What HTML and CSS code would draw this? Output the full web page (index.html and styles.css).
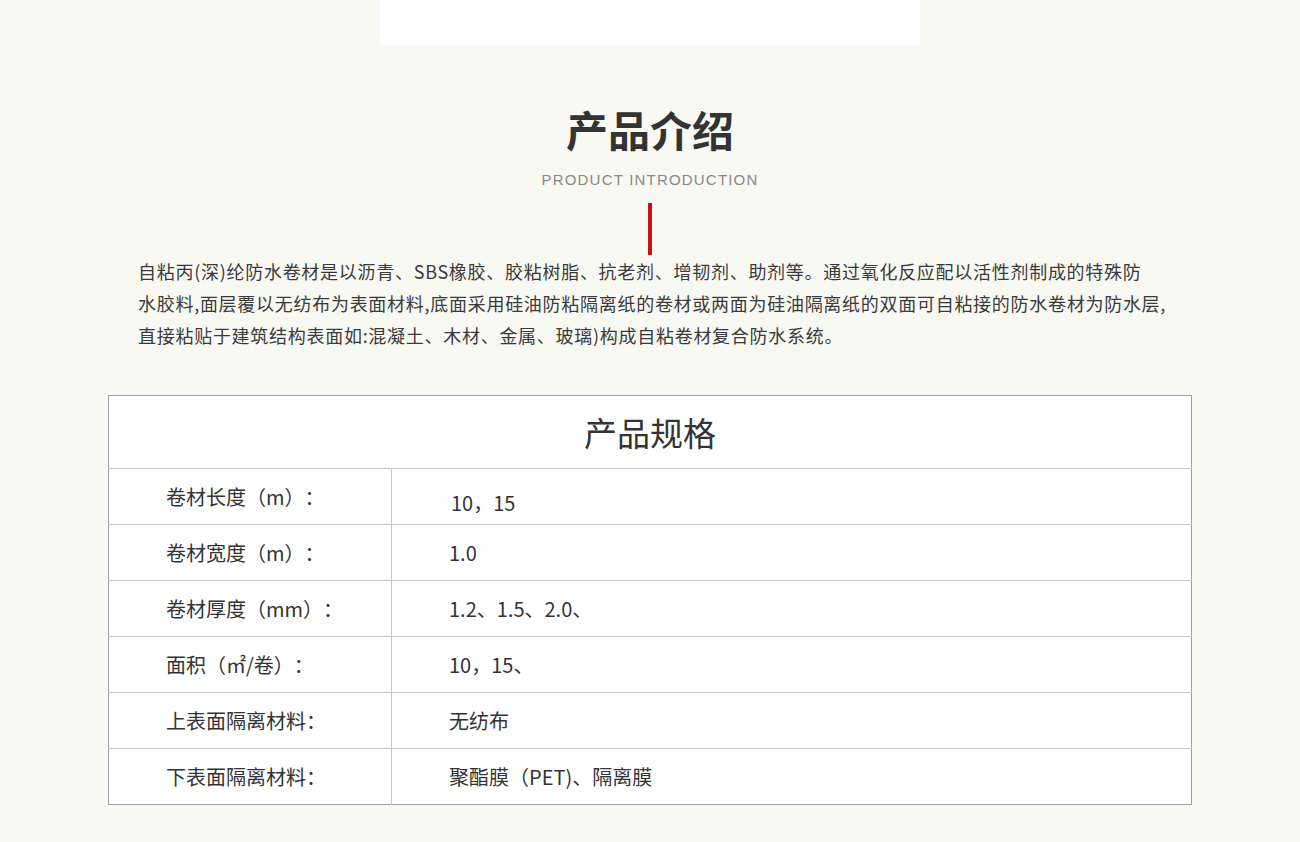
FILE: index.html
```html
<!DOCTYPE html>
<html lang="zh-CN">
<head>
<meta charset="utf-8">
<title>产品介绍</title>
<link rel="stylesheet" href="styles.css">
</head>
<body>
<div class="top-box"></div>
<section class="intro">
  <h1 class="intro-title">产品介绍</h1>
  <div class="intro-sub">PRODUCT INTRODUCTION</div>
  <div class="intro-bar"></div>
  <p class="intro-text">自粘丙(深)纶防水卷材是以沥青、SBS橡胶、胶粘树脂、抗老剂、增韧剂、助剂等。通过氧化反应配以活性剂制成的特殊防<br>水胶料,面层覆以无纺布为表面材料,底面采用硅油防粘隔离纸的卷材或两面为硅油隔离纸的双面可自粘接的防水卷材为防水层,<br>直接粘贴于建筑结构表面如:混凝土、木材、金属、玻璃)构成自粘卷材复合防水系统。</p>
</section>
<table class="spec">
  <thead>
    <tr><th colspan="2" class="spec-head">产品规格</th></tr>
  </thead>
  <tbody>
    <tr><td class="label">卷材长度（m）：</td><td class="value value-low">10，15</td></tr>
    <tr><td class="label">卷材宽度（m）：</td><td class="value">1.0</td></tr>
    <tr><td class="label">卷材厚度（mm）：</td><td class="value">1.2、1.5、2.0、</td></tr>
    <tr><td class="label">面积（㎡/卷）：</td><td class="value">10，15、</td></tr>
    <tr><td class="label">上表面隔离材料：</td><td class="value">无纺布</td></tr>
    <tr><td class="label">下表面隔离材料：</td><td class="value">聚酯膜（PET)、隔离膜</td></tr>
  </tbody>
</table>
</body>
</html>
```

FILE: styles.css
```css
html, body {
  margin: 0;
  padding: 0;
}
body {
  background: #f9f9f4;
  font-family: "Noto Sans CJK SC", "Noto Sans", sans-serif;
  color: #333;
  height: 842px;
  overflow: hidden;
  text-spacing-trim: space-all;
}
.top-box {
  width: 540px;
  height: 45px;
  margin: 0 auto;
  background: #fff;
}
.intro {
  display: flex;
  flex-direction: column;
  align-items: center;
}
.intro-title {
  margin: 63px 0 0;
  font-size: 42px;
  line-height: 42px;
  font-weight: 600;
  color: #333;
}
.intro-sub {
  margin-top: 22px;
  font-family: "Liberation Sans", Arial, sans-serif;
  font-size: 15px;
  line-height: 16px;
  color: #888;
  letter-spacing: 1.2px;
}
.intro-bar {
  margin-top: 15px;
  width: 4px;
  height: 52px;
  background: #c8101e;
}
.intro-text {
  margin: 0;
  width: 1024px;
  white-space: nowrap;
  font-size: 18px;
  line-height: 32px;
  letter-spacing: 0.72px;
  color: #3a3a3a;
}
.spec {
  margin: 44px auto 0;
  width: 1084px;
  border-collapse: collapse;
  background: #fff;
  border: 1px solid #a0a0a0;
}
.spec-head {
  height: 72px;
  padding: 0;
  font-size: 33px;
  font-weight: normal;
  color: #333;
  text-align: center;
  border-bottom: 1px solid #c4c4c4;
}
.spec td {
  height: 55px;
  padding: 0 0 0 57px;
  font-size: 20px;
  color: #333;
  border-top: 1px solid #c4c4c4;
  vertical-align: middle;
}
.spec td.label {
  width: 225px;
  border-right: 1px solid #c4c4c4;
}
.spec td.value-low {
  padding-top: 12px;
  padding-left: 59px;
  height: 43px;
}
```
